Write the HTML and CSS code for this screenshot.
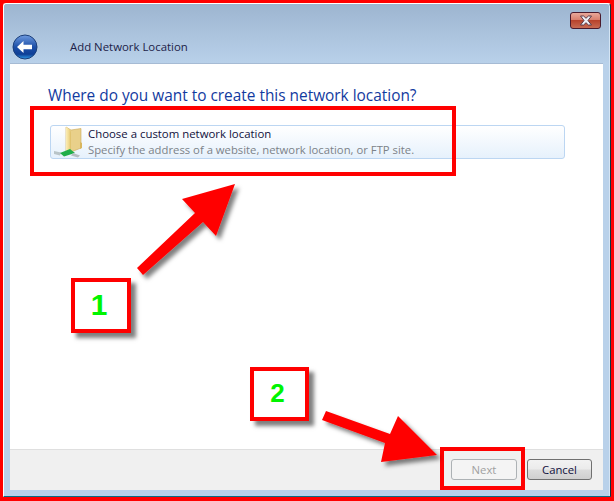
FILE: index.html
```html
<!DOCTYPE html>
<html lang="en">
<head>
<meta charset="utf-8">
<title>Add Network Location</title>
<link rel="stylesheet" href="styles.css">
</head>
<body>
<div class="page">
  <div class="window">
    <header class="glass">
      <div class="titlebar">
        <button class="close" aria-label="Close">
          <svg width="16" height="11" viewBox="0 0 16 11"><path d="M2.500 1h3.100L8 3.300 10.400 1h3.100L10 5.500l3.500 4.500h-3.100L8 7.700 5.600 10H2.500L6 5.500z" fill="#eef0f6" stroke="#5a3a48" stroke-width="1"/></svg>
        </button>
      </div>
      <div class="nav">
        <svg class="back" width="26" height="26" viewBox="0 0 26 26">
          <defs>
            <linearGradient id="backFill" x1="0" y1="0" x2="0" y2="1">
              <stop offset="0" stop-color="#6f9be0"/>
              <stop offset="0.5" stop-color="#1c4fa8"/>
              <stop offset="0.8" stop-color="#0f3f96"/>
              <stop offset="1" stop-color="#2f9be8"/>
            </linearGradient>
          </defs>
          <circle cx="13" cy="13" r="12" fill="url(#backFill)" stroke="#1c3f7a" stroke-width="1"/>
          <path d="M5 13l6.500-6v3.800H20v4.400h-8.500V19z" fill="#fff"/>
        </svg>
        <span class="title">Add Network Location</span>
      </div>
    </header>
    <div class="client">
      <main class="main">
        <h1 class="heading">Where do you want to create this network location?</h1>
        <div class="card">
          <svg class="folder" width="32" height="33" viewBox="0 0 32 33">
            <defs>
              <linearGradient id="folderFill" x1="0" y1="0" x2="1" y2="0">
                <stop offset="0" stop-color="#fbeeb8"/>
                <stop offset="0.6" stop-color="#f0d88c"/>
                <stop offset="1" stop-color="#dcbc66"/>
              </linearGradient>
            </defs>
            <path d="M14 1l5 3 10-1.500V22l-15 6z" fill="#e9d08a" stroke="#c9a95c" stroke-width=".6"/>
            <path d="M14 1c3 2 5 3 5 6v18l-5 3z" fill="url(#folderFill)"/>
            <path d="M28 16l2 1v5l-2 1z" fill="#d9b65e"/>
            <path d="M2 25l7 1.500-1 3-6-1.500z" fill="#b9c4c8"/>
            <path d="M8 27l10-4 5 4-11 3.500z" fill="#1fae4a"/>
            <path d="M21 27l7 2.500-2 2-7-2z" fill="#b4bcc0"/>
          </svg>
          <div class="card-text">
            <div class="card-title">Choose a custom network location</div>
            <div class="card-sub">Specify the address of a website, network location, or FTP site.</div>
          </div>
        </div>
      </main>
      <footer class="footer">
        <button class="btn btn-disabled" disabled>Next</button>
        <button class="btn">Cancel</button>
      </footer>
    </div>
  </div>

  <div class="mark mark-card"></div>
  <div class="mark mark-next"></div>
  <svg class="arrows" width="614" height="501" viewBox="0 0 614 501">
    <defs>
      <filter id="arrowShadow" x="-20%" y="-20%" width="150%" height="150%">
        <feDropShadow dx="4" dy="4" stdDeviation="2" flood-color="#000" flood-opacity=".5"/>
      </filter>
    </defs>
    <polygon filter="url(#arrowShadow)" fill="#f00" points="137,268 195,213 182,199 235,184 216,236 203,222 143,275"/>
    <polygon filter="url(#arrowShadow)" fill="#f00" points="326,411 390,434 398,416 437,455 381,462 385,443 322,420"/>
  </svg>
  <div class="step step-one">1</div>
  <div class="step step-two">2</div>
</div>
</body>
</html>
```
FILE: styles.css
```css
* { box-sizing: border-box; }
html, body { margin: 0; padding: 0; background: #f00; }
.page {
  position: relative;
  width: 614px;
  height: 501px;
  overflow: hidden;
  border: solid #f00;
  border-width: 3px 3px 4px 3px;
  font-family: "Open Sans", "Noto Sans", sans-serif;
}
.window {
  display: flex;
  flex-direction: column;
  height: 100%;
  padding: 0 7px 6px 6px;
  border: 1px solid #fff;
  border-right-color: #12343e;
  border-bottom-color: #0a6c84;
  border-radius: 3px 3px 0 0;
  background: linear-gradient(#9db5d0 0, #b9d1ea 60px);
  box-shadow: inset -1px 0 0 #d5e4f3;
}
.glass { height: 60px; flex: none; border-bottom: 1px solid #a6bbd4; }
.titlebar { display: flex; justify-content: flex-end; padding: 8px 2px 0 0; }
.close {
  display: flex;
  align-items: center;
  justify-content: center;
  width: 31px;
  height: 17px;
  padding: 0;
  border: 1px solid #4a1a2c;
  border-radius: 3px;
  background: linear-gradient(#e8a89a 0, #d9806e 45%, #b8432c 50%, #c76a52 100%);
}
.nav { display: flex; align-items: center; margin-top: 5px; padding-left: 2px; }
.back { flex: none; }
.title { margin-left: 32px; font-size: 11.4px; line-height: 16px; color: #1c2248; }
.client {
  flex: 1;
  display: flex;
  flex-direction: column;
  background: #fff;
}
.main { flex: 1; padding: 20px 38px 0 38px; }
.heading {
  margin: 0;
  font-size: 15.4px;
  font-weight: 400;
  line-height: 24px;
  color: #123aa0;
}
.card {
  display: flex;
  align-items: center;
  height: 34px;
  margin: 17px 0 0 2px;
  padding-left: 1px;
  border: 1px solid #bcd6f2;
  border-radius: 3px;
  background: linear-gradient(#fff, #e6f1fc);
}
.folder { flex: none; }
.card-text { margin-left: 4px; }
.card-title { font-size: 11.4px; line-height: 16px; color: #10103c; }
.card-sub { font-size: 11.3px; line-height: 16px; color: #7c8288; }
.footer {
  flex: none;
  display: flex;
  justify-content: flex-end;
  gap: 10px;
  height: 41px;
  padding: 9px 11px 0 0;
  background: #f0f0f0;
  border-top: 1px solid #dfdfdf;
}
.btn {
  width: 65px;
  height: 21px;
  padding: 0;
  font-family: inherit;
  font-size: 11.3px;
  color: #10103c;
  border: 1px solid #707070;
  border-radius: 3px;
  background: linear-gradient(#f2f2f2 0, #ebebeb 48%, #dcdcdc 52%, #cfcfcf 100%);
}
.btn-disabled {
  width: 66px;
  color: #a0a0a0;
  border-color: #adb2b5;
  background: #f4f4f4;
}
.mark { position: absolute; border: 4px solid #f00; }
.mark-card { left: 27px; top: 103px; width: 426px; height: 70px; }
.mark-next { left: 437px; top: 444px; width: 85px; height: 43px; }
.arrows { position: absolute; left: -3px; top: -3px; pointer-events: none; }
.step {
  position: absolute;
  display: flex;
  align-items: center;
  justify-content: center;
  background: #fff;
  border: 4px solid #f00;
  box-shadow: 5px 5px 4px rgba(0, 0, 0, .5);
  color: #00f400;
  font-family: "Liberation Sans", sans-serif;
  font-weight: 700;
}
.step-one { left: 68px; top: 275px; width: 60px; height: 55px; padding: 0 4px 2px 0; font-size: 30px; }
.step-two { left: 247px; top: 364px; width: 59px; height: 54px; padding: 0 4px 2px 0; font-size: 26px; }
```
